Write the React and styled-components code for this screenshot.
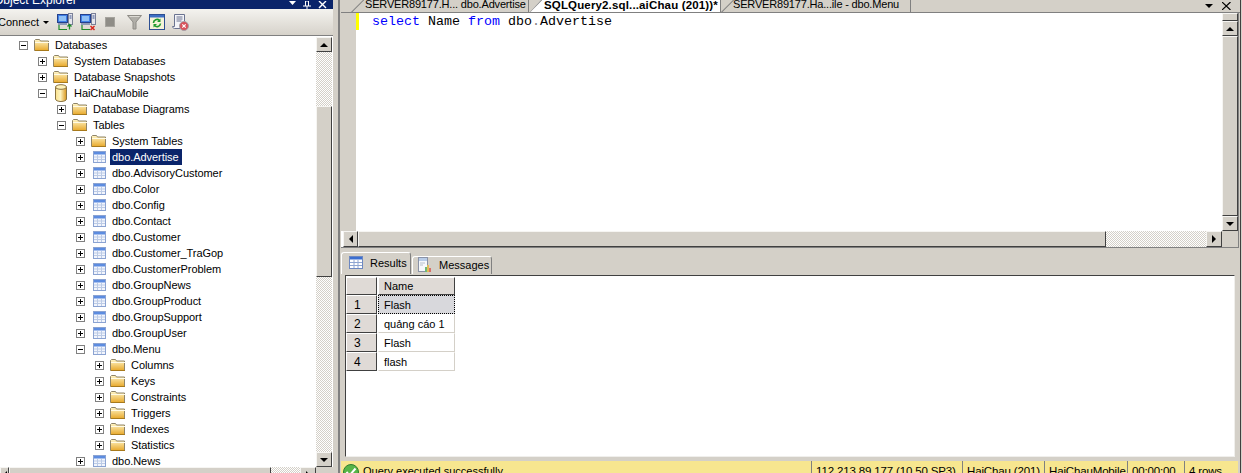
import React from 'react';
import styled, { createGlobalStyle } from 'styled-components';

const GlobalStyle = createGlobalStyle`
  html, body { margin: 0; padding: 0; background: #fff; }
  * { box-sizing: border-box; }
`;

const treeRows = [
  { level: 0, icon: 'folder', open: true, name: 'Databases' },
  { level: 1, icon: 'folder', name: 'System Databases' },
  { level: 1, icon: 'folder', name: 'Database Snapshots' },
  { level: 1, icon: 'db', open: true, name: 'HaiChauMobile' },
  { level: 2, icon: 'folder', name: 'Database Diagrams' },
  { level: 2, icon: 'folder', open: true, name: 'Tables' },
  { level: 3, icon: 'folder', name: 'System Tables' },
  { level: 3, icon: 'table', name: 'dbo.Advertise', selected: true },
  { level: 3, icon: 'table', name: 'dbo.AdvisoryCustomer' },
  { level: 3, icon: 'table', name: 'dbo.Color' },
  { level: 3, icon: 'table', name: 'dbo.Config' },
  { level: 3, icon: 'table', name: 'dbo.Contact' },
  { level: 3, icon: 'table', name: 'dbo.Customer' },
  { level: 3, icon: 'table', name: 'dbo.Customer_TraGop' },
  { level: 3, icon: 'table', name: 'dbo.CustomerProblem' },
  { level: 3, icon: 'table', name: 'dbo.GroupNews' },
  { level: 3, icon: 'table', name: 'dbo.GroupProduct' },
  { level: 3, icon: 'table', name: 'dbo.GroupSupport' },
  { level: 3, icon: 'table', name: 'dbo.GroupUser' },
  { level: 3, icon: 'table', open: true, name: 'dbo.Menu' },
  { level: 4, icon: 'folder', name: 'Columns' },
  { level: 4, icon: 'folder', name: 'Keys' },
  { level: 4, icon: 'folder', name: 'Constraints' },
  { level: 4, icon: 'folder', name: 'Triggers' },
  { level: 4, icon: 'folder', name: 'Indexes' },
  { level: 4, icon: 'folder', name: 'Statistics' },
  { level: 3, icon: 'table', name: 'dbo.News' },
];

const resultRows = ['Flash', 'quảng cáo 1', 'Flash', 'flash'];

const FolderIcon = () => (
  <svg width="16" height="14" viewBox="0 0 16 14">
    <defs>
      <linearGradient id="fold" x1="0" y1="0" x2="0" y2="1">
        <stop offset="0" stopColor="#fff6c8" />
        <stop offset="1" stopColor="#e8a92c" />
      </linearGradient>
    </defs>
    <path d="M0.5 12.5V2.500l1-1h4l1 1.500h8v9.500z" fill="url(#fold)" stroke="#8f8468" />
    <path d="M1 4.500h14" stroke="#fffbe6" />
    <path d="M1 12.500h14" stroke="#a87a1c" />
  </svg>
);

const DbIcon = () => (
  <svg width="14" height="18" viewBox="0 0 14 18">
    <defs>
      <linearGradient id="cyl" x1="0" y1="0" x2="1" y2="0">
        <stop offset="0" stopColor="#fbe28c" />
        <stop offset="0.45" stopColor="#fdf3c0" />
        <stop offset="1" stopColor="#d9961c" />
      </linearGradient>
    </defs>
    <path d="M1.500 3v12c0 1.400 2.400 2.500 5.500 2.500s5.500-1.100 5.500-2.500V3z" fill="url(#cyl)" stroke="#8a7340" />
    <ellipse cx="7" cy="3" rx="5.500" ry="2.300" fill="#fff2b8" stroke="#8a7340" />
  </svg>
);

const TableIcon = () => (
  <svg width="13" height="12" viewBox="0 0 13 12">
    <rect x="0.500" y="0.500" width="12" height="11" fill="#f2f5fc" stroke="#8ba3d2" />
    <rect x="1" y="1" width="11" height="2.500" fill="#5c8ce0" />
    <path d="M4.500 4v7M8.500 4v7M1 6h11M1 8.500h11" stroke="#bccbe6" />
  </svg>
);

const icons = { folder: <FolderIcon />, db: <DbIcon />, table: <TableIcon /> };

const ConnectIcon = ({ red }) => (
  <svg width="16" height="18" viewBox="0 0 16 18">
    <rect x="0.500" y="1.500" width="10" height="8" fill="#3f7fe6" stroke="#25418c" />
    <rect x="2" y="3" width="7" height="5" fill="#8fc0f5" />
    <rect x="1" y="10" width="9" height="2" fill="#8d99b8" />
    <rect x="11.500" y="0.500" width="4" height="11" fill="#e6e6ec" stroke="#7a8098" />
    <path d="M12.500 3h2M12.500 5h2" stroke="#39508c" />
    {red ? (
      <path d="M10.500 13l4 4m0-4l-4 4" stroke="#d8261c" strokeWidth="1.500" />
    ) : (
      <path d="M12.500 11.500v5M10.500 13.500l2-2 2 2" fill="none" stroke="#1d8a2a" strokeWidth="1.300" />
    )}
    <path d="M2 12v4.500h8" fill="none" stroke="#1d8a2a" strokeWidth="1.200" />
  </svg>
);

const StopIcon = () => (
  <svg width="10" height="10" viewBox="0 0 10 10">
    <rect width="10" height="10" fill="#a6a49e" />
    <rect x="1" y="1" width="8" height="8" fill="#8f8d87" />
  </svg>
);

const FilterIcon = () => (
  <svg width="15" height="15" viewBox="0 0 15 15">
    <path d="M0.500 0.500h14L9 7v7H6V7z" fill="#b0aea8" stroke="#8e8c86" />
    <path d="M2.500 1.500h10" stroke="#dddbd5" />
  </svg>
);

const RefreshIcon = () => (
  <svg width="16" height="16" viewBox="0 0 16 16">
    <rect x="0.500" y="0.500" width="15" height="15" fill="#f6f4d8" stroke="#2d4f92" />
    <rect x="1" y="1" width="14" height="2.500" fill="#3d6fc4" />
    <path d="M4.500 9a3.500 3.500 0 0 1 6-2.500M11.500 9.500a3.500 3.500 0 0 1-6 2" fill="none" stroke="#1f9a2c" strokeWidth="1.600" />
    <path d="M11.500 4.500v3.500H8M4.500 13.500V10H8" fill="#1f9a2c" />
  </svg>
);

const ScriptIcon = () => (
  <svg width="17" height="17" viewBox="0 0 17 17">
    <path d="M2.500 0.500h10v9h-2v5h-8c-1 0-2-1-2-2h2z" fill="#f3f4f8" stroke="#6a7390" />
    <path d="M4.500 3h6M4.500 5h6M4.500 7h5" stroke="#6a7390" />
    <circle cx="12" cy="12" r="4.500" fill="#d9525a" stroke="#a6a0a8" />
    <path d="M10.300 10.300l3.400 3.400m0-3.400l-3.400 3.400" stroke="#fff" strokeWidth="1.200" />
  </svg>
);

const GridTabIcon = () => (
  <svg width="14" height="13" viewBox="0 0 14 13">
    <rect x="0.500" y="0.500" width="13" height="12" fill="#fff" stroke="#6d88c0" />
    <rect x="1" y="1" width="12" height="2.500" fill="#3c6fd0" />
    <path d="M5 4v8M9 4v8M1 6.500h12M1 9.500h12" stroke="#8fa6d2" />
  </svg>
);

const MessagesIcon = () => (
  <svg width="14" height="16" viewBox="0 0 14 16">
    <rect x="0.500" y="0.500" width="9" height="14" fill="#f6f8fb" stroke="#8a92a6" />
    <rect x="1" y="1" width="8" height="3" fill="#b8cce8" />
    <path d="M2 6h5M2 8h3" stroke="#b8c0cc" />
    <rect x="7" y="10" width="2" height="5" fill="#6fb878" />
    <rect x="9" y="8" width="2" height="7" fill="#e2bc58" />
    <rect x="11" y="11" width="2" height="4" fill="#d8706a" />
  </svg>
);

const OkIcon = () => (
  <svg width="16" height="16" viewBox="0 0 16 16">
    <circle cx="8" cy="8" r="7.500" fill="#58b548" stroke="#2e7d2e" />
    <path d="M3.500 8l3 3.500 6-7" fill="none" stroke="#fff" strokeWidth="2" />
  </svg>
);

const TreeNode = ({ row }) => (
  <TreeRow $level={row.level}>
    <Expander>{row.open ? <MinusBar /> : <PlusBar />}</Expander>
    <TreeIconSlot>{icons[row.icon]}</TreeIconSlot>
    <TreeLabel $selected={row.selected}>{row.name}</TreeLabel>
  </TreeRow>
);

export default function App() {
  return (
    <Page>
      <GlobalStyle />
      <ExplorerPanel>
        <TitleBar>
          <TitleText>Object Explorer</TitleText>
          <TitleButtons>
            <svg width="7" height="5" viewBox="0 0 7 5"><path d="M0 0h7L3.500 4z" fill="#fff" /></svg>
            <svg width="8" height="9" viewBox="0 0 8 9"><path d="M4 9V5M0 5h8M2.500 5V0h3v5" fill="none" stroke="#fff" /></svg>
            <svg width="9" height="9" viewBox="0 0 9 9"><path d="M1 0l7 7M8 0L1 7" fill="none" stroke="#fff" strokeWidth="1.400" /></svg>
          </TitleButtons>
        </TitleBar>
        <ExplorerToolbar>
          <ConnectLabel>Connect</ConnectLabel>
          <DropArrow />
          <ToolGroup>
            <ConnectIcon />
            <ConnectIcon red />
            <ToolSpaced $l={2}><StopIcon /></ToolSpaced>
            <ToolSpaced $l={5}><FilterIcon /></ToolSpaced>
            <RefreshIcon />
            <ScriptIcon />
          </ToolGroup>
        </ExplorerToolbar>
        <TreeArea>
          <TreeList>
            {treeRows.map((row, i) => <TreeNode key={i} row={row} />)}
          </TreeList>
          <VScroll>
            <ScrollButton $h={15}><Arrow $dir="up" /></ScrollButton>
            <Track $grow={54} />
            <Thumb $h={171} />
            <Track $grow={175} />
            <ScrollButton $h={15}><Arrow $dir="down" /></ScrollButton>
          </VScroll>
        </TreeArea>
        <TreeHScroll>
          <ScrollButton $w={9}><Arrow $dir="left" /></ScrollButton>
          <Thumb $w={262} />
          <Track $grow={1} />
          <ScrollButton $w={16}><Arrow $dir="right" /></ScrollButton>
          <CornerGap />
        </TreeHScroll>
      </ExplorerPanel>

      <Splitter />

      <MainPanel>
        <TabStrip>
          <DocTab $w={178} $pl={14}>SERVER89177.H... dbo.Advertise</DocTab>
          <DocTab $w={192} $pl={15} $active>SQLQuery2.sql...aiChau (201))*</DocTab>
          <DocTab $w={190} $pl={12}>SERVER89177.Ha...ile - dbo.Menu</DocTab>
          <StripButtons>
            <Arrow $dir="down" />
            <svg width="9" height="8" viewBox="0 0 9 8"><path d="M0 0l8.500 8M8.500 0L0 8" stroke="#000" strokeWidth="1.200" fill="none" /></svg>
          </StripButtons>
        </TabStrip>

        <EditorFrame>
          <EditorRow>
            <Gutter />
            <ChangeMark />
            <EditorText>
              <Kw>select</Kw> Name <Kw>from</Kw> dbo<Dot>.</Dot>Advertise
            </EditorText>
            <VScroll $editor>
              <SplitHandle />
              <ScrollButton $h={15}><Arrow $dir="up" /></ScrollButton>
              <Thumb $flex />
              <ScrollButton $h={15}><Arrow $dir="down" /></ScrollButton>
            </VScroll>
          </EditorRow>
          <EditorHScroll>
            <ScrollButton $w={15}><Arrow $dir="left" /></ScrollButton>
            <Thumb $w={748} />
            <Track $grow={1} />
            <ScrollButton $w={16}><Arrow $dir="right" /></ScrollButton>
            <CornerFill />
          </EditorHScroll>
        </EditorFrame>

        <ResultTabs>
          <ResultTab $active>
            <GridTabIcon />
            <span>Results</span>
          </ResultTab>
          <ResultTab>
            <MessagesIcon />
            <span>Messages</span>
          </ResultTab>
        </ResultTabs>

        <ResultsBox>
          <ResultGrid>
            <CornerCell />
            <HeaderCell>Name</HeaderCell>
            {resultRows.map((value, i) => (
              <React.Fragment key={i}>
                <RowHeader>{i + 1}</RowHeader>
                <DataCell $selected={i === 0}>{value}</DataCell>
              </React.Fragment>
            ))}
          </ResultGrid>
        </ResultsBox>

        <StatusBar>
          <StatusMessage>
            <OkIcon />
            <span>Query executed successfully.</span>
          </StatusMessage>
          <StatusCell $w={151}>112.213.89.177 (10.50 SP3)</StatusCell>
          <StatusCell $w={82}>HaiChau (201)</StatusCell>
          <StatusCell $w={83}>HaiChauMobile</StatusCell>
          <StatusCell $w={57}>00:00:00</StatusCell>
          <StatusCell $w={54}>4 rows</StatusCell>
        </StatusBar>
      </MainPanel>
      <RightEdge />
    </Page>
  );
}

const uiFont = `"Liberation Sans", Arial, sans-serif`;
const dither = `
  background-color: #fff;
  background-image: conic-gradient(#d4d0c8 25%, #fff 0 50%, #d4d0c8 0 75%, #fff 0);
  background-size: 2px 2px;
`;
const raised = `
  background: #d4d0c8;
  border: 1px solid;
  border-color: #f6f5f2 #404040 #404040 #f6f5f2;
`;

const Page = styled.div`
  display: flex;
  width: 1242px;
  height: 473px;
  overflow: hidden;
  background: #d4d0c8;
  font-family: ${uiFont};
  font-size: 11px;
  color: #000;
`;

const ExplorerPanel = styled.div`
  display: flex;
  flex-direction: column;
  width: 333px;
  flex: none;
`;

const TitleBar = styled.div`
  display: flex;
  justify-content: space-between;
  height: 9px;
  overflow: hidden;
  background: #0a246a;
  flex: none;
`;

const TitleText = styled.span`
  margin: -7px 0 0 -6px;
  font-size: 12px;
  line-height: 15px;
  color: #fff;
`;

const TitleButtons = styled.div`
  display: flex;
  gap: 7px;
  align-items: flex-start;
  padding: 1px 6px 0 0;
`;

const ExplorerToolbar = styled.div`
  display: flex;
  align-items: center;
  height: 27px;
  flex: none;
  background: linear-gradient(#f4f3ef, #d6d2ca);
  border-bottom: 1px solid #808080;
`;

const ConnectLabel = styled.span`
  margin-left: -2px;
  font-size: 11px;
`;

const DropArrow = styled.span`
  margin-left: 4px;
  border: 3px solid transparent;
  border-top: 3px solid #000;
  border-bottom: 0;
`;

const ToolGroup = styled.div`
  display: flex;
  align-items: center;
  gap: 7px;
  margin-left: 8px;
`;

const ToolSpaced = styled.div`
  display: flex;
  margin-left: ${p => p.$l}px;
`;

const TreeArea = styled.div`
  display: flex;
  height: 431px;
  flex: none;
  background: #fff;
`;

const TreeList = styled.div`
  flex: 1;
  padding-top: 1px;
  overflow: hidden;
`;

const TreeRow = styled.div`
  display: flex;
  align-items: center;
  height: 16px;
  padding-left: ${p => 19 + p.$level * 19}px;
`;

const Expander = styled.span`
  position: relative;
  width: 9px;
  height: 9px;
  flex: none;
  border: 1px solid #808080;
  background: #fff;
`;

const MinusBar = styled.span`
  position: absolute;
  left: 1px;
  top: 3px;
  width: 5px;
  height: 1px;
  background: #000;
`;

const PlusBar = styled(MinusBar)`
  &::after {
    content: '';
    position: absolute;
    left: 2px;
    top: -2px;
    width: 1px;
    height: 5px;
    background: #000;
  }
`;

const TreeIconSlot = styled.span`
  display: flex;
  justify-content: center;
  width: 16px;
  margin-left: 6px;
  flex: none;
`;

const TreeLabel = styled.span`
  margin-left: 3px;
  padding: 0 3px 0 2px;
  line-height: 16px;
  white-space: nowrap;
  font-size: 11px;
  letter-spacing: -0.05px;
  background: ${p => (p.$selected ? '#0a246a' : 'transparent')};
  color: ${p => (p.$selected ? '#fff' : '#000')};
`;

const VScroll = styled.div`
  display: flex;
  flex-direction: column;
  width: 16px;
  flex: none;
  margin-right: ${p => (p.$editor ? 0 : 1)}px;
  padding-top: ${p => (p.$editor ? 0 : 1)}px;
`;

const SplitHandle = styled.div`
  ${raised}
  height: 8px;
  flex: none;
`;

const ScrollButton = styled.div`
  ${raised}
  display: flex;
  align-items: center;
  justify-content: center;
  flex: none;
  height: ${p => (p.$h ? `${p.$h}px` : 'auto')};
  width: ${p => (p.$w ? `${p.$w}px` : 'auto')};
`;

const Track = styled.div`
  ${dither}
  flex: ${p => p.$grow} 1 0;
`;

const Thumb = styled.div`
  ${raised}
  flex: ${p => (p.$flex ? '1 1 0' : 'none')};
  height: ${p => (p.$h ? `${p.$h}px` : 'auto')};
  width: ${p => (p.$w ? `${p.$w}px` : 'auto')};
`;

const arrowBorders = {
  up: 'border-width: 0 4px 4px; border-color: transparent transparent #000;',
  down: 'border-width: 4px 4px 0; border-color: #000 transparent transparent;',
  left: 'border-width: 4px 4px 4px 0; border-color: transparent #000 transparent transparent;',
  right: 'border-width: 4px 0 4px 4px; border-color: transparent transparent transparent #000;',
};

const Arrow = styled.span`
  width: 0;
  height: 0;
  border-style: solid;
  ${p => arrowBorders[p.$dir]}
`;

const TreeHScroll = styled.div`
  display: flex;
  height: 16px;
  flex: none;
`;

const CornerGap = styled.div`
  width: 17px;
  flex: none;
`;

const Splitter = styled.div`
  width: 8px;
  flex: none;
  background: linear-gradient(to right, #d4d0c8 5px, #808080 5px 7px, #d4d0c8 7px);
`;

const MainPanel = styled.div`
  display: flex;
  flex-direction: column;
  width: 899px;
  flex: none;
`;

const RightEdge = styled.div`
  width: 2px;
  flex: none;
  background: linear-gradient(to right, #404040 1px, #d4d0c8 1px);
`;

const TabStrip = styled.div`
  display: flex;
  align-items: flex-start;
  height: 13px;
  flex: none;
  overflow: hidden;
  padding-left: 10px;
  border-bottom: 1px solid #808080;
`;

const DocTab = styled.div`
  position: relative;
  display: flex;
  align-items: center;
  flex: none;
  width: ${p => p.$w}px;
  height: ${p => (p.$active ? 13 : 12)}px;
  padding: 0 0 4px ${p => p.$pl}px;
  font-size: ${p => (p.$active ? 11.5 : 11)}px;
  letter-spacing: ${p => (p.$active ? '0.15px' : '-0.18px')};
  font-weight: ${p => (p.$active ? 'bold' : 'normal')};
  white-space: nowrap;
  background: ${p => (p.$active ? '#fff' : '#d4d0c8')};
  border-right: 1px solid #808080;
  clip-path: polygon(0 100%, 12px 0, 100% 0, 100% 100%);

  &::before {
    content: '';
    position: absolute;
    left: 5px;
    top: -3px;
    width: 2px;
    height: 18px;
    background: #808080;
    transform: rotate(45deg);
  }
`;

const StripButtons = styled.div`
  display: flex;
  align-items: center;
  gap: 9px;
  margin-left: auto;
  padding: 2px 9px 0 0;
`;

const EditorFrame = styled.div`
  display: flex;
  flex-direction: column;
  height: 235px;
  flex: none;
  margin-right: 1px;
  background: #fff;
  border-bottom: 1px solid #808080;
  border-right: 1px solid #808080;
`;

const EditorRow = styled.div`
  display: flex;
  flex: 1;
  min-height: 0;
`;

const Gutter = styled.div`
  width: 15px;
  flex: none;
  background: #d4d0c8;
`;

const ChangeMark = styled.div`
  width: 3px;
  height: 17px;
  flex: none;
  background: #ffff00;
`;

const EditorText = styled.pre`
  flex: 1;
  margin: 0;
  padding: 1px 0 0 13px;
  font-family: "Liberation Mono", "Courier New", monospace;
  font-size: 13.33px;
  line-height: 16px;
  color: #000;
`;

const Kw = styled.span`
  color: #0000ff;
`;

const Dot = styled.span`
  color: #808080;
`;

const EditorHScroll = styled.div`
  display: flex;
  height: 16px;
  flex: none;
  padding-left: 2px;
`;

const CornerFill = styled.div`
  width: 16px;
  flex: none;
  background: #d4d0c8;
`;

const ResultTabs = styled.div`
  display: flex;
  align-items: flex-end;
  height: 27px;
  flex: none;
  padding-bottom: 1px;
`;

const ResultTab = styled.div`
  display: flex;
  align-items: center;
  gap: 7px;
  height: ${p => (p.$active ? 22 : 18)}px;
  width: ${p => (p.$active ? 70 : 80)}px;
  padding: 0 0 2px ${p => (p.$active ? 7 : 5)}px;
  margin-right: 1px;
  font-size: 11px;
  background: #d4d0c8;
  border: 1px solid #808080;
  border-bottom: 0;
  border-top-color: #fff;
  border-left-color: #fff;
  border-radius: 3px 3px 0 0;
`;

const ResultsBox = styled.div`
  flex: 1;
  min-height: 0;
  margin: 0 5px 4px 4px;
  padding-top: 1px;
  background: #fff;
  border: 1px solid;
  border-color: #404040 #f0efec #f0efec #404040;
`;

const ResultGrid = styled.div`
  display: grid;
  grid-template-columns: 31px 77px;
  grid-template-rows: 18px repeat(4, 19px);
  column-gap: 1px;
  font-size: 11px;
`;

const CornerCell = styled.div`
  background: #dfdad6;
  border: 1px solid;
  border-color: #fff #404040 #404040 #fff;
`;

const HeaderCell = styled(CornerCell)`
  display: flex;
  align-items: center;
  padding-left: 5px;
`;

const RowHeader = styled(CornerCell)`
  display: flex;
  align-items: center;
  padding-left: 7px;
  font-size: 12px;
`;

const DataCell = styled.div`
  display: flex;
  align-items: center;
  padding-left: 5px;
  white-space: nowrap;
  background: ${p => (p.$selected ? '#d8d8dc' : '#fff')};
  border: 1px ${p => (p.$selected ? 'dotted #000' : 'solid transparent')};
  border-bottom: 1px ${p => (p.$selected ? 'dotted #000' : 'solid #d4d0c8')};
  border-right: 1px ${p => (p.$selected ? 'dotted #000' : 'solid #d4d0c8')};
`;

const StatusBar = styled.div`
  display: flex;
  height: 12px;
  flex: none;
  margin-right: 2px;
  overflow: hidden;
  background: #f7e68f;
  font-size: 11.5px;
  letter-spacing: -0.15px;
  line-height: 14px;
`;

const StatusMessage = styled.div`
  display: flex;
  align-items: flex-start;
  gap: 4px;
  flex: 1;
  padding: 3px 0 0 2px;
  font-size: 11px;
  letter-spacing: 0;
`;

const StatusCell = styled.div`
  width: ${p => p.$w}px;
  flex: none;
  padding: 3px 0 0 4px;
  white-space: nowrap;
  border-left: 1px solid #808080;
`;
